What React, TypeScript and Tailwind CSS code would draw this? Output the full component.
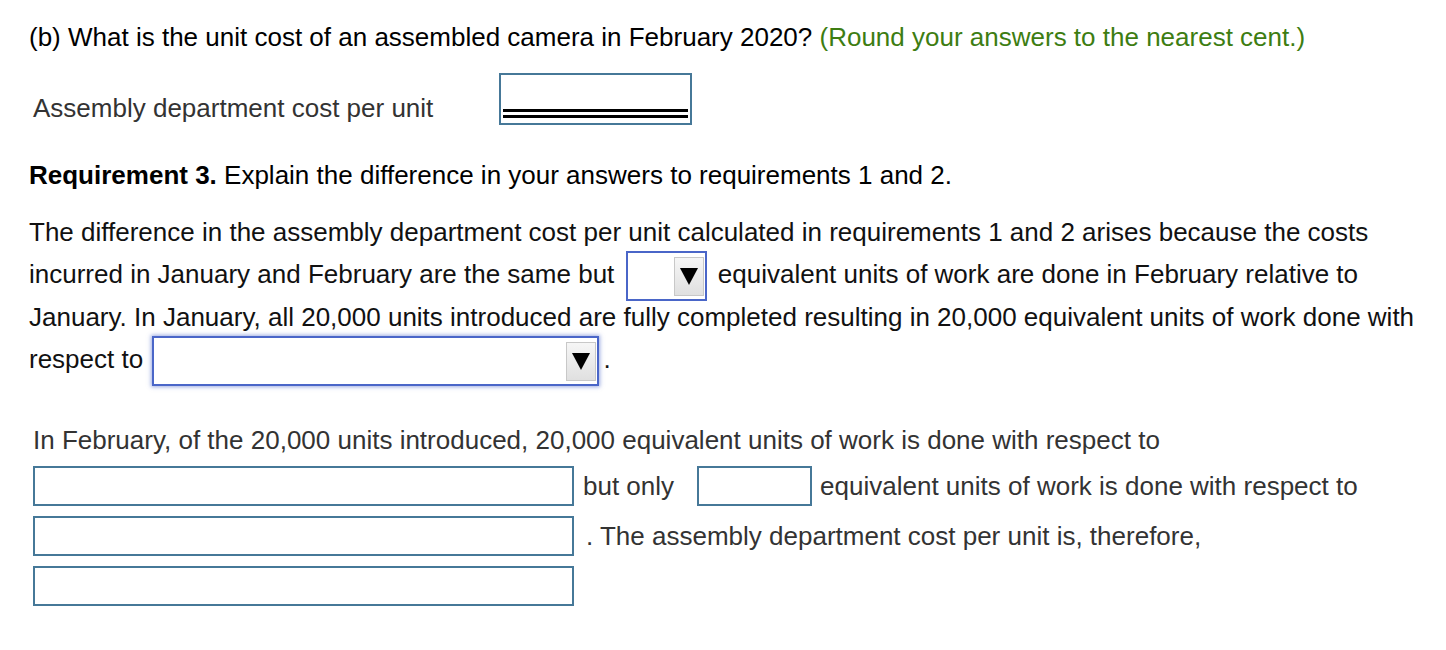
import React from 'react'

const FONT = { fontFamily: '"Liberation Sans", Arial, sans-serif' }

function DropArrow() {
  return (
    <span className="flex h-[39px] w-[30px] items-center justify-center border border-[#c8c8c8] bg-gradient-to-b from-[#f6f6f6] to-[#e0e0e0]">
      <svg width="20" height="20" viewBox="0 0 20 20">
        <polygon points="1,2 19,2 10,19" fill="#000" />
      </svg>
    </span>
  )
}

function Select({ width, glow, spacing }: { width: string; glow?: boolean; spacing: string }) {
  return (
    <span
      className={`-my-[5px] inline-flex h-[50px] ${width} ${spacing} items-center justify-end border-2 border-[#4a66c8] bg-white pr-[1px] align-middle ${
        glow ? 'shadow-[0_0_4px_1px_rgba(74,102,200,0.55)]' : ''
      }`}
    >
      <DropArrow />
    </span>
  )
}

function TextBox({ width }: { width: string }) {
  return <div className={`h-[40px] ${width} shrink-0 border-2 border-[#467898] bg-white`} />
}

export default function App() {
  return (
    <div className="min-h-[650px] bg-white pt-[22px] pl-[29px] text-[26px] leading-[30px]" style={FONT}>
      {/* Part (b) */}
      <p className="text-black">
        (b) What is the unit cost of an assembled camera in February 2020?{' '}
        <span className="text-[#3d7d12]">(Round your answers to the nearest cent.)</span>
      </p>

      <div className="mt-[21px] flex items-start">
        <span className="mt-[20px] w-[470px] pl-[4px] text-[#333]">Assembly department cost per unit</span>
        <div className="flex h-[52px] w-[193px] items-end border-2 border-[#467898] px-[2px] pb-[5px]">
          <div className="h-[9px] w-full border-y-[3px] border-black" />
        </div>
      </div>

      {/* Requirement 3 */}
      <p className="mt-[35px] text-black">
        <span className="font-bold">Requirement 3.</span> Explain the difference in your answers to requirements 1 and 2.
      </p>

      <p className="mt-[21px] w-[1400px] leading-[42px] text-[#111]">
        The difference in the assembly department cost per unit calculated in requirements 1 and 2 arises because the costs
        incurred in January and February are the same but{' '}
        <Select width="w-[81px]" spacing="ml-[4px] mr-[4px]" /> equivalent units of work are done in February relative to
        January. In January, all 20,000 units introduced are fully completed resulting in 20,000 equivalent units of work
        done with respect to <Select width="w-[447px]" glow spacing="ml-[2px] mr-[4px]" />.
      </p>

      <div className="mt-[44px] pl-[4px] text-[#333]">
        <p>In February, of the 20,000 units introduced, 20,000 equivalent units of work is done with respect to</p>

        <div className="mt-[11px] flex flex-col gap-[10px]">
          <div className="flex items-center">
            <TextBox width="w-[541px]" />
            <span className="ml-[9px]">but only</span>
            <span className="ml-[23px]">
              <TextBox width="w-[115px]" />
            </span>
            <span className="ml-[8px]">equivalent units of work is done with respect to</span>
          </div>
          <div className="flex items-center">
            <TextBox width="w-[541px]" />
            <span className="ml-[12px]">. The assembly department cost per unit is, therefore,</span>
          </div>
          <div className="flex items-center">
            <TextBox width="w-[541px]" />
          </div>
        </div>
      </div>
    </div>
  )
}
